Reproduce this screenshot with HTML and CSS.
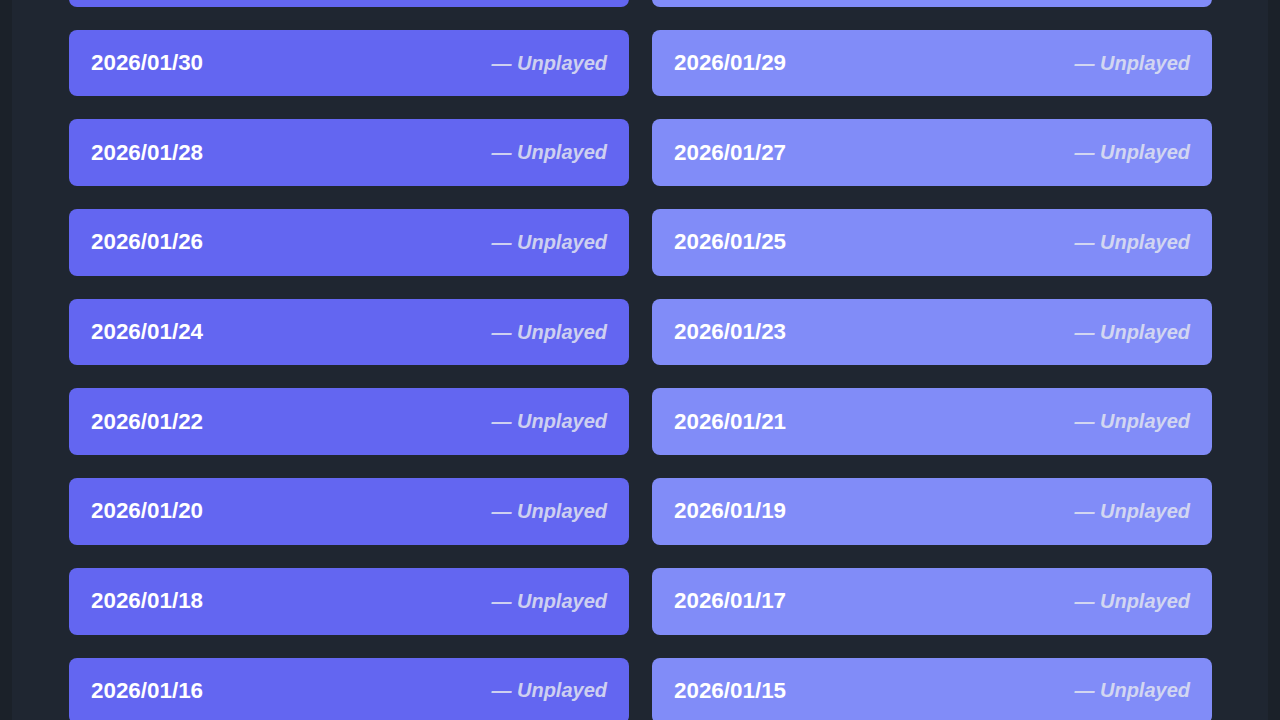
FILE: index.html
```html
<!DOCTYPE html>
<html lang="en">
<head>
    <meta charset="UTF-8">
    <meta name="viewport" content="width=device-width, initial-scale=1.0">
    <link rel="stylesheet" href="styles.css">
</head>
<body>

    <div class="panel">
        <div class="day-list">
            <div class="day even"><span class="date">2026/02/01</span><span class="status">— Unplayed</span></div>
            <div class="day odd"><span class="date">2026/01/31</span><span class="status">— Unplayed</span></div>
            <div class="day even"><span class="date">2026/01/30</span><span class="status">— Unplayed</span></div>
            <div class="day odd"><span class="date">2026/01/29</span><span class="status">— Unplayed</span></div>
            <div class="day even"><span class="date">2026/01/28</span><span class="status">— Unplayed</span></div>
            <div class="day odd"><span class="date">2026/01/27</span><span class="status">— Unplayed</span></div>
            <div class="day even"><span class="date">2026/01/26</span><span class="status">— Unplayed</span></div>
            <div class="day odd"><span class="date">2026/01/25</span><span class="status">— Unplayed</span></div>
            <div class="day even"><span class="date">2026/01/24</span><span class="status">— Unplayed</span></div>
            <div class="day odd"><span class="date">2026/01/23</span><span class="status">— Unplayed</span></div>
            <div class="day even"><span class="date">2026/01/22</span><span class="status">— Unplayed</span></div>
            <div class="day odd"><span class="date">2026/01/21</span><span class="status">— Unplayed</span></div>
            <div class="day even"><span class="date">2026/01/20</span><span class="status">— Unplayed</span></div>
            <div class="day odd"><span class="date">2026/01/19</span><span class="status">— Unplayed</span></div>
            <div class="day even"><span class="date">2026/01/18</span><span class="status">— Unplayed</span></div>
            <div class="day odd"><span class="date">2026/01/17</span><span class="status">— Unplayed</span></div>
            <div class="day even"><span class="date">2026/01/16</span><span class="status">— Unplayed</span></div>
            <div class="day odd"><span class="date">2026/01/15</span><span class="status">— Unplayed</span></div>
        </div>
    </div>

</body>
</html>
```

FILE: styles.css
```css
body {
    margin: 0;
    font-family: "Liberation Sans", Arial, sans-serif;
    background-color: #1b2129; /* Outer background */
    color: #fff;
    height: 720px;
    overflow: hidden;
}

.panel {
    margin: 0 12px;
    padding: 0 56px 0 57px;
    background-color: #1f2631; /* Slightly lighter panel */
    height: 720px;
    overflow: hidden;
}

.day-list {
    display: grid;
    grid-template-columns: 1fr 1fr;
    column-gap: 23px;
    row-gap: 23px;
    margin-top: -60px; /* List is scrolled */
}

.day {
    display: flex;
    justify-content: space-between;
    align-items: center;
    height: 66.7px;
    padding: 0 22px;
    border-radius: 8px;
    box-sizing: border-box;
}

.day.even {
    background-color: #6366f1;
}

.day.odd {
    background-color: #818cf8;
}

.date {
    font-size: 22.4px;
    font-weight: bold;
}

.status {
    font-size: 20px;
    font-weight: bold;
    font-style: italic;
    color: rgba(226, 228, 240, 0.85);
}
```
